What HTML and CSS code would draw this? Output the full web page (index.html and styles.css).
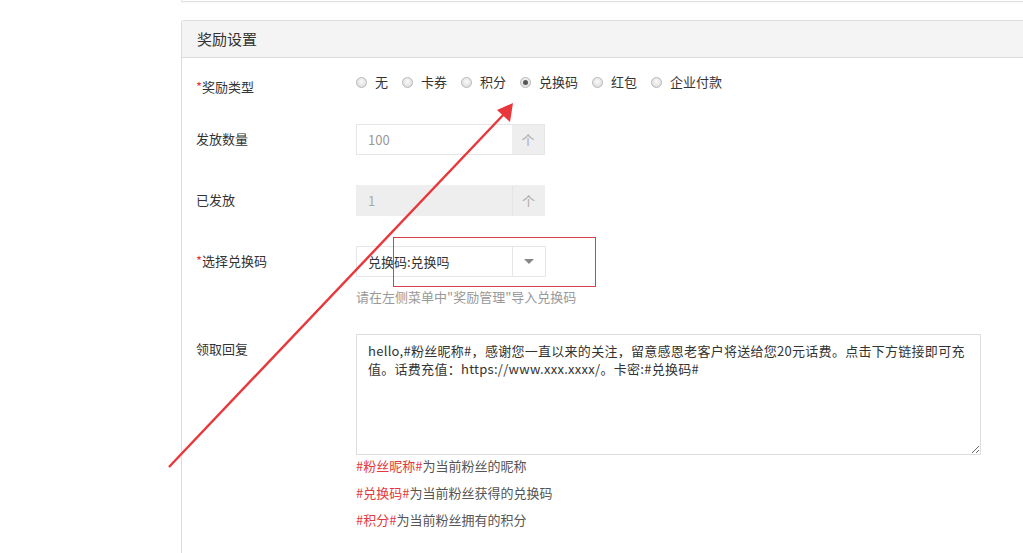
FILE: index.html
```html
<!DOCTYPE html>
<html>

<head>
    <meta charset="utf-8">
    <title>奖励设置</title>
    <link rel="stylesheet" href="styles.css">
</head>

<body>

    <div class="main">
        <div class="top_panel"></div>

        <div class="panel">
            <div class="panel_head">奖励设置</div>

            <div class="panel_body">

                <div class="row row_first">
                    <div class="label"><span class="req">*</span>奖励类型</div>
                    <div class="radios">
                        <span class="radio"><i></i>无</span>
                        <span class="radio"><i></i>卡券</span>
                        <span class="radio"><i></i>积分</span>
                        <span class="radio checked"><i></i>兑换码</span>
                        <span class="radio"><i></i>红包</span>
                        <span class="radio"><i></i>企业付款</span>
                    </div>
                </div>

                <div class="row">
                    <div class="label">发放数量</div>
                    <div class="input_group">
                        <input class="num_input" type="text" value="100">
                        <span class="addon">个</span>
                    </div>
                </div>

                <div class="row">
                    <div class="label">已发放</div>
                    <div class="input_group disabled">
                        <input class="num_input" type="text" value="1" disabled>
                        <span class="addon">个</span>
                    </div>
                </div>

                <div class="row row_select">
                    <div class="label"><span class="req">*</span>选择兑换码</div>
                    <div>
                        <div class="select">
                            <span class="select_text">兑换码:兑换吗</span>
                            <span class="select_btn"><b class="caret"></b></span>
                        </div>
                        <div class="help">请在左侧菜单中"奖励管理"导入兑换码</div>
                    </div>
                </div>

                <div class="row">
                    <div class="label">领取回复</div>
                    <div>
                        <textarea class="reply">hello,#粉丝昵称#，感谢您一直以来的关注，留意感恩老客户将送给您20元话费。点击下方链接即可充值。话费充值：https://www.xxx.xxxx/。卡密:#兑换码#</textarea>
                        <div class="hints">
                            <div><span class="tag">#粉丝昵称#</span>为当前粉丝的昵称</div>
                            <div><span class="tag">#兑换码#</span>为当前粉丝获得的兑换码</div>
                            <div><span class="tag">#积分#</span>为当前粉丝拥有的积分</div>
                        </div>
                    </div>
                </div>

            </div>
        </div>
    </div>

    <!-- annotation drawn over the screenshot -->
    <svg class="markup" width="1023" height="553" viewBox="0 0 1023 553">
        <rect x="393.5" y="237.5" width="202" height="49" fill="none" stroke="#d8414c" stroke-width="1" />
        <line x1="169" y1="467" x2="506" y2="112" stroke="#e8363b" stroke-width="2.4" />
        <polygon points="513,103 510,122 497,110" fill="#e8363b" />
    </svg>

</body>

</html>
```

FILE: styles.css
```css
body {
    margin: 0;
    background: #fff;
    font-family: "Noto Sans CJK SC", "Noto Sans", sans-serif;
    font-size: 13px;
    color: #333;
    overflow: hidden;
}

.main {
    margin-left: 181px;
}

.top_panel {
    height: 1px;
    border-bottom: 1px solid #e2e2e2;
    border-left: 1px solid #e2e2e2;
    box-shadow: 0 1px 2px rgba(0, 0, 0, .04);
}

.panel {
    margin-top: 18px;
    border: 1px solid #dcdcdc;
    border-right: none;
    border-bottom: none;
    border-radius: 3px 0 0 0;
    height: 540px;
}

.panel_head {
    height: 36px;
    line-height: 36px;
    padding-left: 15px;
    background: #f4f4f4;
    border-bottom: 1px solid #dcdcdc;
    font-size: 15px;
    color: #333;
}

.panel_body {
    padding: 14px 0 0 14px;
}

.row {
    display: flex;
    align-items: flex-start;
    margin-bottom: 30px;
}

.row_first {
    margin-bottom: 22px;
}

.row_select {
    margin-bottom: 27px;
}

.label {
    width: 160px;
    flex: none;
    line-height: 30px;
    font-size: 13px;
}

.req {
    color: #e4393c;
}

.radios {
    display: flex;
    line-height: 20px;
}

.radio {
    display: flex;
    align-items: center;
    margin-right: 14px;
}

.radio i {
    width: 9px;
    height: 9px;
    border: 1px solid #b8b8b8;
    border-radius: 50%;
    background: radial-gradient(circle at 50% 40%, #fafafa, #d6d6d6);
    margin-right: 8px;
    position: relative;
}

.checked i:after {
    content: "";
    position: absolute;
    left: 2px;
    top: 2px;
    width: 5px;
    height: 5px;
    border-radius: 50%;
    background: #555;
}

.input_group {
    display: flex;
    width: 189px;
    height: 31px;
    box-sizing: border-box;
    border: 1px solid #e6e6e6;
}

.num_input {
    width: 155px;
    box-sizing: border-box;
    border: none;
    outline: none;
    padding: 0 11px;
    font-family: inherit;
    font-size: 13px;
    color: #999;
    background: #fff;
}

.addon {
    flex: 1;
    background: #eee;
    color: #aaa;
    text-align: center;
    line-height: 29px;
    font-size: 13px;
}

.disabled {
    border-color: #eee;
}

.disabled .num_input {
    background: #eee;
    color: #aaa;
}

.disabled .addon {
    border-left: 1px solid #e4e4e4;
}

.select {
    display: flex;
    width: 190px;
    height: 31px;
    box-sizing: border-box;
    border: 1px solid #e6e6e6;
}

.select_text {
    width: 155px;
    padding-left: 11px;
    box-sizing: border-box;
    line-height: 29px;
    color: #333;
}

.select_btn {
    flex: 1;
    border-left: 1px solid #e6e6e6;
    display: flex;
    align-items: center;
    justify-content: center;
}

.caret {
    width: 0;
    height: 0;
    border-left: 5px solid transparent;
    border-right: 5px solid transparent;
    border-top: 5px solid #888;
}

.help {
    margin-top: 10px;
    line-height: 20px;
    color: #999;
}

.reply {
    display: block;
    width: 625px;
    height: 121px;
    box-sizing: border-box;
    margin: 0;
    padding: 7px 11px;
    border: 1px solid #ddd;
    font-family: inherit;
    font-size: 13px;
    line-height: 18px;
    letter-spacing: 0.28px;
    color: #333;
    resize: both;
}

.hints {
    margin-top: -3px;
    line-height: 27px;
    color: #555;
}

.tag {
    color: #e4393c;
}

.markup {
    position: absolute;
    left: 0;
    top: 0;
    pointer-events: none;
}
```
